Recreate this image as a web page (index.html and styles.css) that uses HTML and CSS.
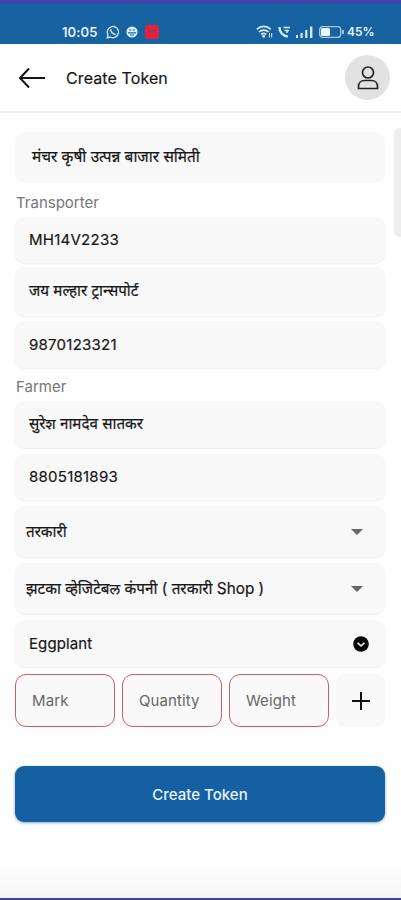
FILE: index.html
```html
<!DOCTYPE html>
<html lang="mr">
<head>
<meta charset="utf-8">
<title>Create Token</title>
<link rel="stylesheet" href="styles.css">
</head>
<body>
<div class="screen">
  <div class="status">
    <span class="clock">10:05</span>
    <svg class="s-wa" width="14" height="14" viewBox="0 0 14 14" fill="none" stroke="#d5eaf5" stroke-width="1.3"><path d="M1.2 12.8l.8-3A5.6 5.6 0 1 1 4.2 12z"/><path d="M4.700 4.200c0 2.700 2 5.300 5 5.200" stroke-width="1.500"/></svg>
    <svg class="s-globe" width="12" height="12" viewBox="0 0 12 12"><circle cx="6" cy="6" r="5.600" fill="#d9edf6"/><path d="M3 4h2.300M6.700 4H9M2 6.800h8M4 9h4" stroke="#1b67a0" stroke-width="1.200"/></svg>
    <svg class="s-red" width="14" height="14" viewBox="0 0 14 14"><rect width="14" height="14" rx="3" fill="#e0223b"/><path d="M3 5l2 2 2-2 2 1.500 2-2" stroke="#94365b" stroke-width="1.200" fill="none"/></svg>
    <span class="grow"></span>
    <svg class="s-wifi" width="17" height="13" viewBox="0 0 17 13" fill="none" stroke="#d5eaf5" stroke-width="1.700"><path d="M.8 4.300a10 10 0 0 1 14 0M3 7a7 7 0 0 1 9.600 0M5.200 9.400a4 4 0 0 1 5 0"/><circle cx="7.700" cy="11.300" r=".7"/><path d="M13.500 8v4.500M15.700 8v4.500" stroke-width="1"/></svg>
    <svg class="s-call" width="13" height="12" viewBox="0 0 13 12" fill="none" stroke="#d5eaf5"><path d="M1.500 1c-.3 5 3.500 9 8.300 9.500" stroke-width="2.400"/><path d="M5.500 1.500h6.500M6.500 4.500h4.500M9 4.500v2.500" stroke-width="1.500"/></svg>
    <svg class="s-bars" width="17" height="12" viewBox="0 0 17 12" fill="#d5eaf5"><path d="M0 9h2v3H0zM4.500 7h2.200v5H4.500zM9.200 4h2.200v8H9.200zM14 .5h2.400V12H14z"/></svg>
    <svg class="s-batt" width="25" height="12" viewBox="0 0 25 12"><rect x=".7" y=".7" width="21" height="10.600" rx="3" fill="none" stroke="#a4cce6" stroke-width="1.300"/><rect x="2" y="2" width="9" height="8" rx="1.500" fill="#f3fafd"/><path d="M24 4v4" stroke="#d5eaf5" stroke-width="1.500"/></svg>
    <span class="pct">45%</span>
  </div>
  <header class="bar">
    <svg width="28" height="22" viewBox="0 0 28 22" fill="none" stroke="#151515" stroke-width="2"><path d="M11 1.500L2 11l9 9.500M2 11h25"/></svg>
    <h1>Create Token</h1>
    <div class="avatar"><svg width="22" height="24" viewBox="0 0 22 24" fill="none" stroke="#252525" stroke-width="1.700"><circle cx="11" cy="6.500" r="5.500"/><path d="M1.500 22.500v-2.300c0-3.500 2.700-5.700 6-5.700h7c3.300 0 6 2.200 6 5.700v2.300z"/></svg></div>
  </header>
  <main class="form">
    <div class="field market"><span class="t1">मंचर कृषी उत्पन्न बाजार समिती</span></div>
    <div class="label l1">Transporter</div>
    <div class="field f2"><span class="num">MH14V2233</span></div>
    <div class="field f3"><span class="t3">जय मल्हार ट्रान्सपोर्ट</span></div>
    <div class="field f4"><span class="num">9870123321</span></div>
    <div class="label l2">Farmer</div>
    <div class="field f5"><span class="t5">सुरेश नामदेव सातकर</span></div>
    <div class="field f6"><span class="num">8805181893</span></div>
    <div class="field select f7"><span class="t7">तरकारी</span><i class="caret"></i></div>
    <div class="field select f8"><span class="t8">झटका व्हेजिटेबल कंपनी ( तरकारी Shop )</span><i class="caret"></i></div>
    <div class="field f9"><span class="t9">Eggplant</span><svg width="16" height="16" viewBox="0 0 16 16"><circle cx="8" cy="8" r="7.800" fill="#050505"/><path d="M4.500 6.800L8 9.800l3.500-3" fill="none" stroke="#e8e8e8" stroke-width="1.700"/></svg></div>
    <div class="entry">
      <div class="box">Mark</div>
      <div class="box">Quantity</div>
      <div class="box">Weight</div>
      <div class="add"><svg width="20" height="20" viewBox="0 0 20 20"><path d="M10 1v18M1 10h18" stroke="#111" stroke-width="2"/></svg></div>
    </div>
    <div class="submit"><span>Create Token</span></div>
  </main>
  <div class="scroll"></div>
</div>
</body>
</html>
```
FILE: styles.css
```css
* { box-sizing: border-box; }
body { margin: 0; font-family: Inter, "Noto Sans", sans-serif; color: #171717; }
.screen {
  position: relative;
  height: 900px;
  overflow: hidden;
  border-top: 4px solid #3c43a9;
  border-bottom: 2px solid #3b46a5;
  background: linear-gradient(#fefefe 0, #fefefe 860px, #f5f5f6 894px);
}
.status {
  height: 40px;
  padding: 15px 26px 0 62px;
  display: flex;
  align-items: center;
  background: #1762a0;
  color: #e3f2f9;
  font-weight: 600;
}
.clock { font-size: 13px; letter-spacing: .1px; width: 44px; }
.s-globe { margin-left: 6px; }
.s-red { margin-left: 7px; }
.grow { flex: 1; }
.s-call { margin-left: 5px; }
.s-bars { margin-left: 5px; }
.s-batt { margin-left: 6px; }
.pct { font-size: 12px; width: 28px; margin-left: 3px; }
.bar {
  height: 69px;
  padding: 0 11px 0 18px;
  display: flex;
  align-items: center;
  background: #fff;
  border-bottom: 2px solid #eee;
}
h1 { margin: 0 0 0 20px; flex: 1; font-size: 16px; font-weight: 400; line-height: 24px; letter-spacing: .1px; -webkit-text-stroke: .2px; }
.avatar { width: 45px; height: 45px; border-radius: 50%; background: #e2e2e2; display: flex; align-items: center; justify-content: center; }
.form { padding: 19px 16px 0 15px; display: flex; flex-direction: column; }
.field {
  display: flex;
  align-items: center;
  justify-content: space-between;
  padding: 0 16px 0 14px;
  border-radius: 10px;
  background: #f8f8f8;
  box-shadow: 0 1px 2px #00000012;
  font-size: 15px;
  line-height: 20px;
  white-space: nowrap;
  -webkit-text-stroke: .2px;
}
.market { height: 51px; padding: 0 16px 2px 17px; box-shadow: none; }
.label { height: 34px; line-height: 39px; font-size: 15px; color: #777; padding-left: 1px; }
.num { letter-spacing: .25px; }
.t1 { font-size: 15.4px; }
.t3, .t5, .t7 { font-size: 15.200px; }
.t5 { padding-bottom: 1px; }
.t8 { font-size: 15.300px; }
.t9 { letter-spacing: .1px; }
.f2 { height: 46px; }
.f3 { height: 49px; margin-top: 4px; padding-bottom: 1px; }
.f4 { height: 47px; margin-top: 5px; }
.l2 { height: 33px; line-height: 37px; }
.f5 { height: 47px; }
.f6 { height: 46px; margin-top: 6px; }
.f7 { height: 51px; margin-top: 6px; }
.f8 { height: 51px; margin-top: 6px; }
.f9 { height: 47px; margin-top: 6px; }
.select { padding: 0 22px 0 11px; }
.caret { border: 6px solid transparent; border-top-color: #666; border-bottom: 0; }
.entry { display: grid; grid-template-columns: 100px 100px 100px 49px; gap: 7px; margin-top: 7px; }
.box { height: 53px; padding-left: 16px; display: flex; align-items: center; border: 1.500px solid #d45a62; border-radius: 11px; background: #f9f9f9; color: #666; font-size: 15px; letter-spacing: .1px; }
.add { display: flex; align-items: center; justify-content: center; background: #f8f8f8; border-radius: 9px; }
.submit { height: 56px; margin-top: 39px; border-radius: 9px; background: #1560a3; color: #e7f3fb; font-size: 15px; font-weight: 500; display: flex; align-items: center; justify-content: center; box-shadow: 0 1px 3px #1560a388; }
.scroll { position: absolute; right: 0; top: 124px; width: 7px; height: 109px; background: #ededed; border-radius: 6px 0 0 6px; }
```
